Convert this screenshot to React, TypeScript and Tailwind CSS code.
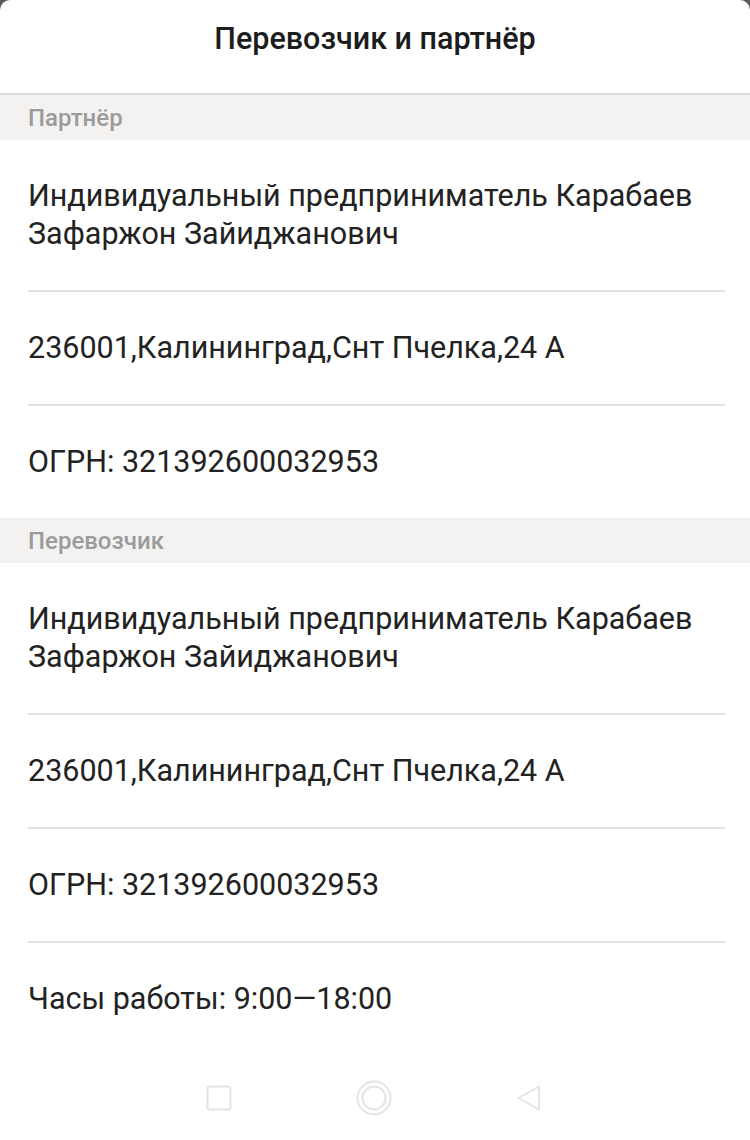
import React from 'react';

const font = { fontFamily: 'Roboto, "Noto Sans", sans-serif' };

type Section = {
  title: string;
  rows: string[][];
};

const sections: Section[] = [
  {
    title: 'Партнёр',
    rows: [
      ['Индивидуальный предприниматель Карабаев', 'Зафаржон Зайиджанович'],
      ['236001,Калининград,Снт Пчелка,24 А'],
      ['ОГРН: 321392600032953'],
    ],
  },
  {
    title: 'Перевозчик',
    rows: [
      ['Индивидуальный предприниматель Карабаев', 'Зафаржон Зайиджанович'],
      ['236001,Калининград,Снт Пчелка,24 А'],
      ['ОГРН: 321392600032953'],
      ['Часы работы: 9:00—18:00'],
    ],
  },
];

export default function App() {
  return (
    <div className="w-[750px] h-[1140px] bg-[#5a5a5a] overflow-hidden" style={font}>
      <div className="h-full bg-white rounded-t-[10px] flex flex-col">
        {/* Header */}
        <header className="h-[95px] border-b-2 border-[#dcdcdc] flex items-center justify-center pb-[15px]">
          <h1 className="text-[30.5px] font-medium text-[#1c1c1c]">Перевозчик и партнёр</h1>
        </header>

        <main className="flex-1">
          {sections.map((section) => (
            <section key={section.title}>
              <div className="h-[45px] bg-[#f3f2f1] flex items-center px-[28px]">
                <span className="text-[24px] font-medium text-[#9b9b9b]">{section.title}</span>
              </div>
              <div className="pl-[28px] pr-[25px]">
                {section.rows.map((row, i) => (
                  <div
                    key={i}
                    className={`py-[37px] text-[30.5px] leading-[38px] text-[#222222] ${
                      i < section.rows.length - 1 ? 'border-b-2 border-[#e2e2e2]' : ''
                    }`}
                  >
                    {row.map((line) => (
                      <div key={line}>{line}</div>
                    ))}
                  </div>
                ))}
              </div>
            </section>
          ))}
        </main>

        {/* Android nav bar */}
        <nav className="h-[84px] flex items-center justify-center gap-[124px] pr-[2px]">
          <svg width="26" height="26" viewBox="0 0 26 26" fill="none">
            <rect x="1.5" y="1.5" width="23" height="23" rx="2" stroke="#e4e4e4" strokeWidth="2" />
          </svg>
          <svg width="36" height="36" viewBox="0 0 36 36" fill="none">
            <circle cx="18" cy="18" r="16.5" stroke="#e4e4e4" strokeWidth="2" />
            <circle cx="18" cy="18" r="11.5" stroke="#e4e4e4" strokeWidth="2" />
          </svg>
          <svg width="26" height="28" viewBox="0 0 26 28" fill="none">
            <path d="M23 2.5 L2.5 14 L23 25.5 Z" stroke="#e4e4e4" strokeWidth="2" strokeLinejoin="round" />
          </svg>
        </nav>
      </div>
    </div>
  );
}
